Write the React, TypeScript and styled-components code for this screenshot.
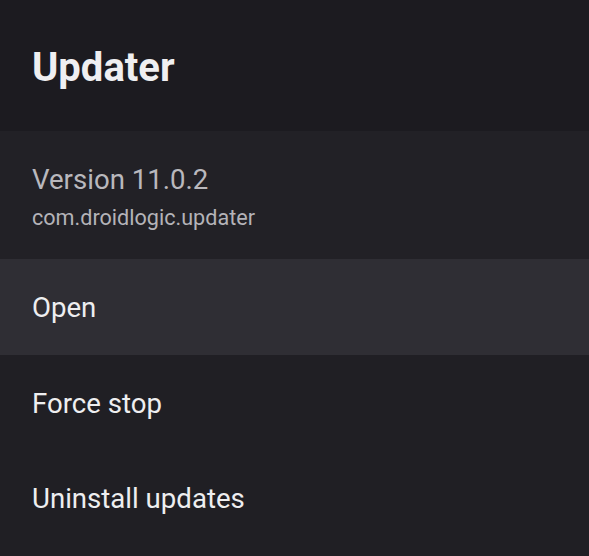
import React from "react";
import styled, { createGlobalStyle } from "styled-components";

const GlobalStyle = createGlobalStyle`
  html, body {
    margin: 0;
    padding: 0;
    background: #201f24;
  }
  body {
    font-family: Roboto, "Noto Sans", sans-serif;
  }
`;

const Page = styled.div`
  width: 589px;
  height: 556px;
  background: #201f24;
  display: flex;
  flex-direction: column;
  overflow: hidden;
`;

const Header = styled.div`
  height: 131px;
  background: #1c1b20;
  display: flex;
  align-items: center;
  padding-left: 32px;
  padding-top: 4px;
  box-sizing: border-box;
`;

const Title = styled.h1`
  margin: 0;
  font-size: 40px;
  font-weight: 700;
  color: #efeff1;
`;

const Info = styled.div`
  height: 128px;
  background: #222126;
  display: flex;
  flex-direction: column;
  justify-content: center;
  padding-left: 32px;
  padding-top: 4px;
  box-sizing: border-box;
  gap: 7px;
`;

const Version = styled.div`
  font-size: 27.6px;
  color: #b9b8bd;
  line-height: 34px;
`;

const Pkg = styled.div`
  font-size: 21.6px;
  color: #b4b3b8;
  line-height: 28px;
`;

const Row = styled.div<{ $focused?: boolean }>`
  height: 95.5px;
  flex-shrink: 0;
  background: ${(p) => (p.$focused ? "#2f2e34" : "transparent")};
  display: flex;
  align-items: center;
  padding-left: 32px;
  padding-top: 2px;
  box-sizing: border-box;
  font-size: 27.6px;
  color: #eeeef0;
`;

const items = ["Open", "Force stop", "Uninstall updates"];

export default function App() {
  return (
    <Page>
      <GlobalStyle />
      <Header>
        <Title>Updater</Title>
      </Header>
      <Info>
        <Version>Version 11.0.2</Version>
        <Pkg>com.droidlogic.updater</Pkg>
      </Info>
      {items.map((label, i) => (
        <Row key={label} $focused={i === 0}>
          {label}
        </Row>
      ))}
    </Page>
  );
}
